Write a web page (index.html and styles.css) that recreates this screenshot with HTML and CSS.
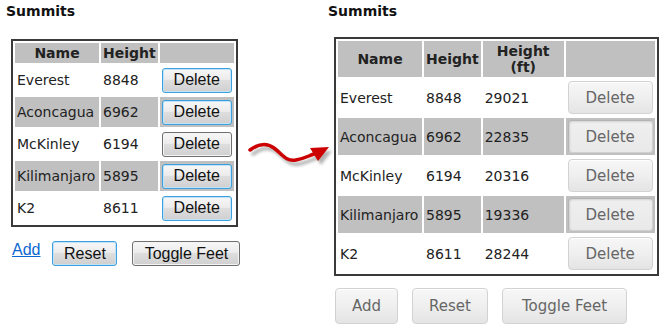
FILE: index.html
```html
<!DOCTYPE html>
<html>
<head>
<meta charset="utf-8">
<link rel="stylesheet" href="styles.css">
</head>
<body>
<div class="page">
  <section class="panel panel-old">
    <h2 class="title">Summits</h2>
    <table class="grid grid-old">
      <thead>
        <tr><th class="c-name">Name</th><th class="c-h">Height</th><th class="c-del-old"></th></tr>
      </thead>
      <tbody>
        <tr><td>Everest</td><td>8848</td><td class="act"><button class="wbtn">Delete</button></td></tr>
        <tr class="alt"><td>Aconcagua</td><td>6962</td><td class="act"><button class="wbtn">Delete</button></td></tr>
        <tr><td>McKinley</td><td>6194</td><td class="act"><button class="wbtn plain">Delete</button></td></tr>
        <tr class="alt"><td>Kilimanjaro</td><td>5895</td><td class="act"><button class="wbtn">Delete</button></td></tr>
        <tr><td>K2</td><td>8611</td><td class="act"><button class="wbtn">Delete</button></td></tr>
      </tbody>
    </table>
    <div class="controls-old">
      <a class="link" href="#">Add</a>
      <button class="wbtn reset-old">Reset</button>
      <button class="wbtn plain toggle-old">Toggle Feet</button>
    </div>
  </section>
  <svg class="arrow" width="80" height="34" viewBox="0 0 80 34">
    <defs>
      <filter id="blur" x="-20%" y="-50%" width="140%" height="200%">
        <feGaussianBlur stdDeviation="1.6"/>
      </filter>
    </defs>
    <g transform="translate(3,4)" opacity="0.45" filter="url(#blur)">
      <path d="M2 12 C 10 6, 18 4, 26 10 S 38 24, 48 22 S 60 18, 66 16" fill="none" stroke="#555" stroke-width="3.5" stroke-linecap="round"/>
      <polygon points="62,10 81,9 70,23" fill="#555"/>
    </g>
    <path d="M2 12 C 10 6, 18 4, 26 10 S 38 24, 48 22 S 60 18, 66 16" fill="none" stroke="#cc0000" stroke-width="3.5" stroke-linecap="round"/>
    <polygon points="62,10 81,9 70,23" fill="#cc0000"/>
  </svg>
  <section class="panel panel-new">
    <h2 class="title">Summits</h2>
    <table class="grid grid-new">
      <thead>
        <tr><th class="c-name">Name</th><th class="c-h">Height</th><th class="c-ft">Height<br>(ft)</th><th class="c-del-new"></th></tr>
      </thead>
      <tbody>
        <tr><td>Everest</td><td>8848</td><td>29021</td><td class="act"><button class="nbtn">Delete</button></td></tr>
        <tr class="alt"><td>Aconcagua</td><td>6962</td><td>22835</td><td class="act"><button class="nbtn pressed">Delete</button></td></tr>
        <tr><td>McKinley</td><td>6194</td><td>20316</td><td class="act"><button class="nbtn">Delete</button></td></tr>
        <tr class="alt"><td>Kilimanjaro</td><td>5895</td><td>19336</td><td class="act"><button class="nbtn pressed">Delete</button></td></tr>
        <tr><td>K2</td><td>8611</td><td>28244</td><td class="act"><button class="nbtn">Delete</button></td></tr>
      </tbody>
    </table>
    <div class="controls-new">
      <button class="nbtn big add-new">Add</button>
      <button class="nbtn big reset-new">Reset</button>
      <button class="nbtn big toggle-new">Toggle Feet</button>
    </div>
  </section>
</div>
</body>
</html>
```
FILE: styles.css
```css
html, body {
  margin: 0;
  padding: 0;
  background: #ffffff;
}
body {
  font-family: "DejaVu Sans", Verdana, sans-serif;
  font-size: 14px;
  color: #222;
}
.page {
  display: flex;
  align-items: flex-start;
  padding: 3px 0 0 6px;
}
.panel-old {
  width: 242px;
  flex: none;
}
.panel-new {
  flex: none;
}
.title {
  margin: 0;
  font-size: 14px;
  line-height: 16px;
  font-weight: bold;
  color: #111;
}
.grid {
  border: 2px solid #3a3a3a;
  border-spacing: 2px;
  border-collapse: separate;
}
.grid th {
  background: #c0c0c0;
  font-weight: bold;
  text-align: center;
  padding: 0 2px;
  box-sizing: border-box;
  color: #222;
}
.grid td {
  padding: 0 2px;
  box-sizing: border-box;
  white-space: nowrap;
  vertical-align: middle;
}
.grid tr.alt td {
  background: #c0c0c0;
}
.grid td.act {
  text-align: center;
  padding: 0;
}
.c-name { width: 84px; }
.c-h { width: 56px; }
.c-ft { width: 81px; }
.c-del-old { width: 74px; }
.c-del-new { width: 89px; }

/* old (left) table */
.grid-old {
  margin: 20px 0 0 5px;
}
.grid-old th {
  height: 20px;
  line-height: 16px;
}
.grid-old td {
  height: 30px;
}
.wbtn {
  font-family: "Liberation Sans", Arial, sans-serif;
  font-size: 16px;
  color: #111;
  height: 25px;
  width: 70px;
  padding: 0;
  border: 1px solid #3d9fdb;
  border-radius: 3px;
  background: linear-gradient(#f7f7f7 0%, #ececec 45%, #dedede 50%, #cfcfcf 100%);
  box-shadow: inset 0 0 0 1px #bfe4f8;
  vertical-align: middle;
}
.wbtn.plain {
  border-color: #707070;
  box-shadow: inset 0 0 0 1px #f4f4f4;
}
.controls-old {
  display: flex;
  align-items: flex-start;
  margin: 14px 0 0 6px;
}
.link {
  font-family: "Liberation Sans", Arial, sans-serif;
  font-size: 16px;
  line-height: 16px;
  color: #0b66d0;
  text-decoration: underline;
  margin-top: 1px;
}
.reset-old {
  width: 65px;
  margin-left: 12px;
}
.toggle-old {
  width: 108px;
  margin-left: 15px;
}

/* arrow */
.arrow {
  flex: none;
  overflow: visible;
  margin-top: 135px;
}

/* new (right) table */
.grid-new {
  margin: 18px 0 0 6px;
}
.grid-new th {
  height: 36px;
  line-height: 16px;
}
.grid-new td {
  height: 37px;
  padding: 0 2px;
}
.grid-new td.act {
  padding: 0;
}
.nbtn {
  font-family: "DejaVu Sans", Verdana, sans-serif;
  font-size: 15px;
  color: #666;
  width: 85px;
  height: 33px;
  padding: 0;
  border: 1px solid #d2d2d2;
  border-radius: 4px;
  background: linear-gradient(#f7f7f7 0%, #efefef 50%, #e4e4e4 100%);
  box-shadow: inset 0 1px 0 #ffffff;
  vertical-align: middle;
}
.nbtn.pressed {
  border-color: #b4b4b4 #d0d0d0 #d0d0d0 #b4b4b4;
  background: linear-gradient(#efefef, #e9e9e9);
  box-shadow: inset 1px 1px 2px rgba(0,0,0,0.12);
}
.controls-new {
  display: flex;
  gap: 14px;
  margin: 12px 0 0 7px;
}
.nbtn.big {
  height: 36px;
}
.add-new { width: 63px; }
.reset-new { width: 76px; }
.toggle-new { width: 125px; }
```
